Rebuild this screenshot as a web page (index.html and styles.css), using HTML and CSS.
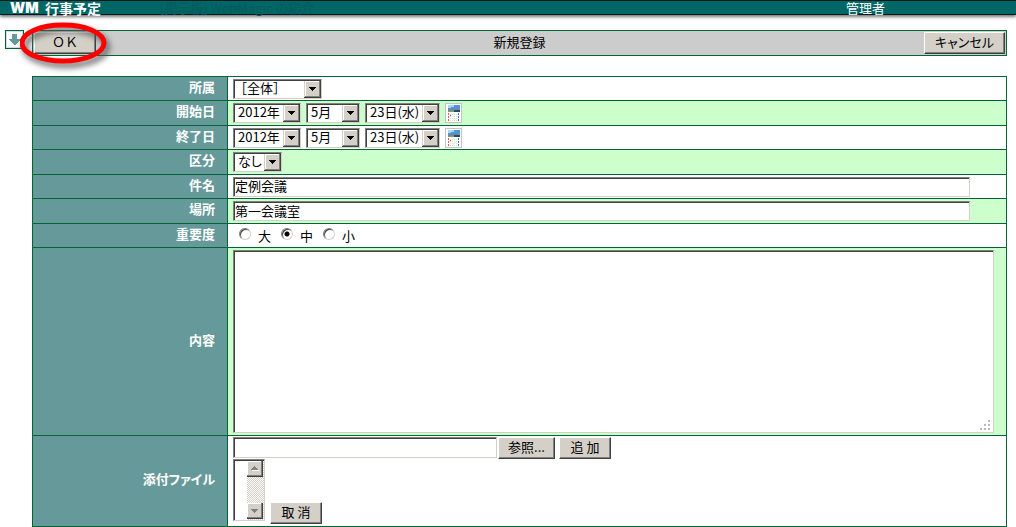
FILE: index.html
```html
<!DOCTYPE html>
<html lang="ja">
<head>
<meta charset="utf-8">
<title>行事予定</title>
<link rel="stylesheet" href="styles.css">
</head>
<body>
<header class="topbar">
  <span class="logo">WM</span>
  <h1 class="app-name">行事予定</h1>
  <span class="ticker">[掲示板] WebMagic の紹介</span>
  <span class="user">管理者</span>
</header>
<form class="page">
  <button type="button" class="jump" aria-label="下へ">
    <svg width="15" height="15" viewBox="0 0 15 15" shape-rendering="crispEdges"><path d="M5 2h5v5h3v1l-5 5H7L2 8V7h3z" fill="#669999"/></svg>
  </button>
  <div class="content">
    <div class="toolbar">
      <div class="ok-wrap">
        <button type="button" class="btn btn-ok">ＯＫ</button>
        <svg class="ring" width="102" height="58" viewBox="0 0 102 58" aria-hidden="true"><ellipse cx="43" cy="21" rx="41" ry="18" fill="none" stroke="#ff0000" stroke-width="5"/></svg>
      </div>
      <h2 class="title">新規登録</h2>
      <button type="button" class="btn btn-cancel">キャンセル</button>
    </div>
    <table class="form">
      <tr>
        <th scope="row"><label for="group">所属</label></th>
        <td><div class="line"><select id="group" class="field pick pick-group"><option>［全体］</option></select></div></td>
      </tr>
      <tr class="alt">
        <th scope="row"><label for="start-year">開始日</label></th>
        <td><div class="line">
          <select id="start-year" class="field pick pick-year"><option>2012年</option></select>
          <select class="field pick pick-month" aria-label="開始月"><option>5月</option></select>
          <select class="field pick pick-day" aria-label="開始日"><option>23日(水)</option></select>
          <button type="button" class="cal" aria-label="カレンダー"><svg width="17" height="20" viewBox="0 0 17 20"><use href="#calendar"/></svg></button>
        </div></td>
      </tr>
      <tr>
        <th scope="row"><label for="end-year">終了日</label></th>
        <td><div class="line">
          <select id="end-year" class="field pick pick-year"><option>2012年</option></select>
          <select class="field pick pick-month" aria-label="終了月"><option>5月</option></select>
          <select class="field pick pick-day" aria-label="終了日"><option>23日(水)</option></select>
          <button type="button" class="cal" aria-label="カレンダー"><svg width="17" height="20" viewBox="0 0 17 20">
            <g id="calendar">
              <rect x=".5" y=".5" width="16" height="19" fill="#fff" stroke="#c4c4c4"/>
              <rect x="3" y="2" width="12" height="7" fill="#4a96e0"/>
              <path d="M3 2h6v2H6v1H3z" fill="#a5d8fa"/>
              <path d="M3 6h3l2-1h3l2 1h2v3H3z" fill="#6c8aa0"/>
              <path d="M3 8h6v1H3z" fill="#80a268"/>
              <path d="M9 7h6v2H9z" fill="#28486c"/>
              <path d="M3.500 10v8" stroke="#f05050" stroke-dasharray="2 1"/>
              <path d="M5.500 11v7M7.500 11v7M9.500 11v7M11.500 11v7" stroke="#c9e6c9" stroke-dasharray="1 1"/>
              <path d="M13.500 10v8" stroke="#4a68dc" stroke-dasharray="2 1"/>
              <path d="M5 12h1v1H5z" fill="#e82b2b"/>
            </g></svg></button>
        </div></td>
      </tr>
      <tr class="alt">
        <th scope="row"><label for="kind">区分</label></th>
        <td><div class="line"><select id="kind" class="field pick pick-kind"><option>なし</option></select></div></td>
      </tr>
      <tr>
        <th scope="row"><label for="subject">件名</label></th>
        <td><div class="line line-text"><input id="subject" type="text" class="field text" value="定例会議"></div></td>
      </tr>
      <tr class="alt">
        <th scope="row"><label for="place">場所</label></th>
        <td><div class="line line-text"><input id="place" type="text" class="field text" value="第一会議室"></div></td>
      </tr>
      <tr>
        <th scope="row">重要度</th>
        <td><div class="line radios">
          <label class="radio"><input type="radio" name="level">大</label>
          <label class="radio"><input type="radio" name="level" checked>中</label>
          <label class="radio"><input type="radio" name="level">小</label>
        </div></td>
      </tr>
      <tr class="alt">
        <th scope="row"><label for="body">内容</label></th>
        <td><div class="line line-body"><textarea id="body" class="field memo" autofocus></textarea></div></td>
      </tr>
      <tr>
        <th scope="row"><label for="file">添付ファイル</label></th>
        <td>
          <div class="files">
            <div class="file-row">
              <input id="file" type="text" class="field file">
              <button type="button" class="btn btn-browse">参照...</button>
              <button type="button" class="btn btn-small">追 加</button>
            </div>
            <div class="file-list">
              <select multiple class="field list" aria-label="添付ファイル一覧"></select>
              <button type="button" class="btn btn-small">取 消</button>
            </div>
          </div>
        </td>
      </tr>
    </table>
  </div>
</form>
</body>
</html>
```
FILE: styles.css
```css
* { box-sizing: border-box; }

body {
  margin: 0;
  background: #fff;
  color: #000;
  font: 13px/16px "Noto Sans CJK JP", sans-serif;
}

button, input, select, textarea { font: inherit; color: inherit; margin: 0; }
h1, h2 { margin: 0; }

.topbar {
  display: grid;
  grid-template-columns: 35px 115px 1fr 170px;
  align-items: start;
  height: 15px;
  padding-left: 10px;
  border-top: 1px solid #001a1a;
  border-bottom: 1px solid #001a1a;
  background: #006666;
  color: #fff;
  line-height: 14px;
  white-space: nowrap;
  box-shadow: 0 2px 3px #777;
}
.logo { font-family: Inter, sans-serif; font-size: 14px; font-weight: 900; }
.app-name { font-size: 14px; line-height: 14px; }
.ticker { color: #0a5a5a; font-feature-settings: "palt"; }

.page {
  display: grid;
  grid-template-columns: 27px 1fr;
  align-items: start;
  padding: 15px 9px 0 5px;
}
.jump {
  display: grid;
  place-items: center;
  width: 19px;
  height: 19px;
  padding: 0;
  border: 1px solid #006633;
  background: #fff;
  box-shadow: inset 0 0 0 1px #cde;
}

.toolbar {
  display: grid;
  grid-template-columns: 81px 1fr 81px;
  align-items: center;
  height: 26px;
  padding: 0 1px;
  border: 1px solid #006633;
  background: #ccc;
}
.title { padding-bottom: 2px; font-size: 13px; font-weight: 400; text-align: center; }
.ok-wrap { position: relative; width: 62px; }
.ring { position: absolute; left: -14px; top: -10px; pointer-events: none; filter: drop-shadow(3px 4px 3px #555); }

.btn {
  display: block;
  height: 22px;
  padding: 0 0 2px;
  border: 1px solid;
  border-color: #fff #404040 #404040 #fff;
  background: #d4d0c8;
  box-shadow: inset -1px -1px #808080;
  font-feature-settings: "palt";
  line-height: 18px;
  white-space: nowrap;
}
.btn-ok { width: 62px; font-feature-settings: normal; }
.btn-cancel { width: 81px; }
.btn-browse { width: 57px; margin-right: 3px; }
.btn-small { width: 52px; font-feature-settings: normal; }

.form {
  width: 100%;
  margin-top: 20px;
  border-collapse: collapse;
}
.form th, .form td { border: 1px solid #006633; }
.form th {
  width: 195px;
  padding: 0 12px 4px 0;
  background: #669999;
  color: #fff;
  font-size: 13px;
  line-height: 18px;
  text-align: right;
  font-feature-settings: "palt";
}
.form td { padding: 0 12px 0 5px; background: #fff; }
.form .alt td { background: #ccffcc; }
.line { display: flex; align-items: center; gap: 5px; height: 23px; }
.alt .line { height: 24px; }
.line-text { padding-right: 24px; }

.field {
  border: 1px solid;
  border-color: #808080 #d4d0c8 #d4d0c8 #808080;
  border-radius: 0;
  outline: 0;
  background: #fff;
  box-shadow: inset 1px 1px #404040;
}
.text { width: 100%; height: 20px; padding: 0 1px 2px; }
.pick {
  appearance: none;
  height: 20px;
  padding: 0 0 2px 4px;
  line-height: 16px;
  background: #fff url("data:image/svg+xml,%3Csvg xmlns='http://www.w3.org/2000/svg' width='17' height='18' shape-rendering='crispEdges'%3E%3Cpath fill='%23404040' d='M0 0h17v18H0z'/%3E%3Cpath fill='%23d4d0c8' d='M0 0h16v17H0z'/%3E%3Cpath fill='%23808080' d='M1 1h15v16H1z'/%3E%3Cpath fill='%23fff' d='M1 1h14v15H1z'/%3E%3Cpath fill='%23d4d0c8' d='M2 2h13v14H2z'/%3E%3Cpath d='M5 7h7v1h-1v1h-1v1H9v1H8v-1H7V9H6V8H5z'/%3E%3C/svg%3E") right top no-repeat;
}
.pick-group { width: 89px; padding-left: 0; }
.pick-year { width: 68px; }
.pick-month { width: 54px; }
.pick-day { width: 75px; }
.pick-kind { width: 49px; font-feature-settings: "palt"; }
.cal { width: 17px; height: 20px; padding: 0; border: 0; background: none; }
.cal svg { display: block; }

.radios { gap: 10px; padding-left: 6px; }
.radio { display: flex; align-items: center; gap: 7px; }
.radio input {
  appearance: none;
  width: 12px;
  height: 12px;
  margin-bottom: 4px;
  border: 1px solid;
  border-color: #808080 #d4d0c8 #d4d0c8 #808080;
  border-radius: 50%;
  box-shadow: inset 1px 1px #404040;
}
.radio input:checked { background: radial-gradient(circle, #000 2px, transparent 3px); }

.alt .line-body { height: 187px; }
.memo {
  width: 100%;
  height: 183px;
  padding: 2px;
  resize: none;
  background: #fff url("data:image/svg+xml,%3Csvg xmlns='http://www.w3.org/2000/svg' width='13' height='12'%3E%3Cpath fill='%23b8b8b8' d='M8 0h2v2H8zM4 4h2v2H4zM8 4h2v2H8zM0 8h2v2H0zM4 8h2v2H4zM8 8h2v2H8z'/%3E%3C/svg%3E") right bottom no-repeat;
}

.files { padding: 1px 0 2px; }
.file-row, .file-list { display: flex; }
.file-row { gap: 1px; }
.file { width: 264px; height: 21px; }
.file-list { gap: 5px; align-items: flex-end; }
.list {
  appearance: none;
  width: 32px;
  height: 62px;
  margin-bottom: 3px;
  overflow: hidden;
  background: #fff url("data:image/svg+xml,%3Csvg xmlns='http://www.w3.org/2000/svg' width='17' height='60' shape-rendering='crispEdges'%3E%3Cdefs%3E%3Cpattern id='p' width='2' height='2' patternUnits='userSpaceOnUse'%3E%3Cpath fill='%23fff' d='M0 0h2v2H0z'/%3E%3Cpath fill='%23d4d0c8' d='M0 0h1v1H0zM1 1h1v1H1z'/%3E%3C/pattern%3E%3Cg id='b'%3E%3Cpath fill='%23404040' d='M0 0h16v16H0z'/%3E%3Cpath fill='%23808080' d='M0 0h15v15H0z'/%3E%3Cpath fill='%23fff' d='M0 0h14v14H0z'/%3E%3Cpath fill='%23d4d0c8' d='M1 1h13v13H1z'/%3E%3C/g%3E%3C/defs%3E%3Cpath fill='url(%23p)' d='M0 0h17v60H0z'/%3E%3Cuse href='%23b' y='1'/%3E%3Cuse href='%23b' y='43'/%3E%3Cpath fill='%23808080' d='M7 6h1v1h1v1h1v1h1v1H4V9h1V8h1V7h1zM4 49h7v1h-1v1H9v1H8v1H7v-1H6v-1H5v-1H4z'/%3E%3Cpath fill='%23fff' d='M5 10h7v1H5z'/%3E%3C/svg%3E") right top no-repeat;
}
```
